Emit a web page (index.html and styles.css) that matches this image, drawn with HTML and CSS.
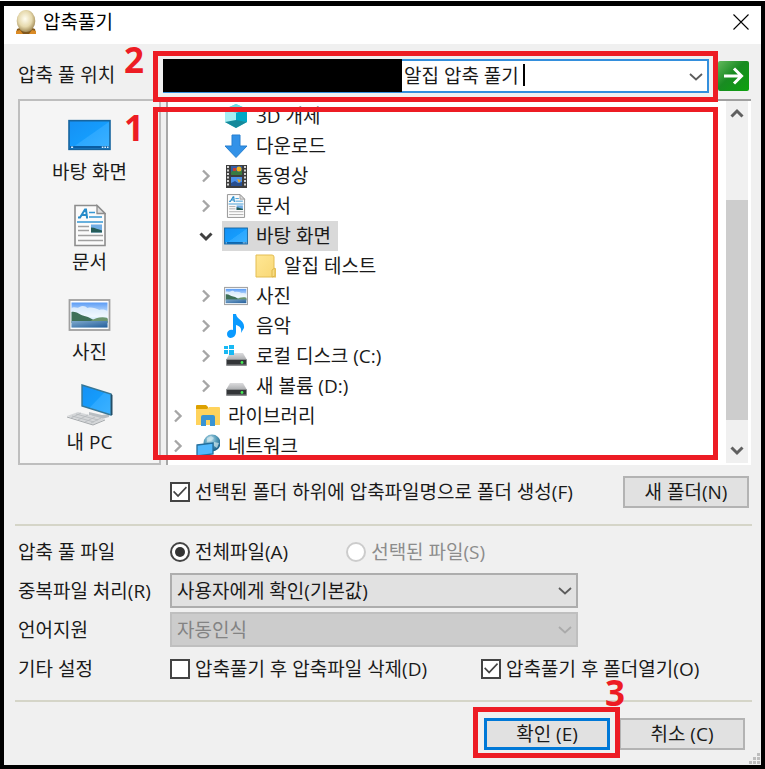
FILE: index.html
```html
<!DOCTYPE html>
<html lang="ko">
<head>
<meta charset="utf-8">
<meta name="viewport" content="width=device-width, initial-scale=1">
<title>압축풀기</title>
<link rel="stylesheet" href="styles.css">
</head>
<body>
<svg class="defs" aria-hidden="true">
  <defs>
    <linearGradient id="g-screen" x1="0" y1="0" x2="1" y2="1"><stop offset="0" stop-color="#1590f4"/><stop offset=".5" stop-color="#159cfc"/><stop offset=".52" stop-color="#2ca8ff"/><stop offset="1" stop-color="#3db2ff"/></linearGradient>
    <linearGradient id="g-sky" x1="0" y1="0" x2="0" y2="1"><stop offset="0" stop-color="#5b9cf5"/><stop offset=".55" stop-color="#e4f4ff"/><stop offset="1" stop-color="#b9dbef"/></linearGradient>
    <linearGradient id="g-sea" x1="0" y1="0" x2="1" y2="1"><stop offset="0" stop-color="#7fa9cc"/><stop offset="1" stop-color="#245f9c"/></linearGradient>
    <linearGradient id="g-drive" x1="0" y1="0" x2="0" y2="1"><stop offset="0" stop-color="#dcdcde"/><stop offset="1" stop-color="#a9abad"/></linearGradient>
    <linearGradient id="g-folder" x1="0" y1="0" x2="1" y2="1"><stop offset="0" stop-color="#ffe794"/><stop offset="1" stop-color="#f8d775"/></linearGradient>
    <radialGradient id="g-egg" cx=".45" cy=".4" r=".6"><stop offset="0" stop-color="#fffdf0"/><stop offset=".6" stop-color="#e6d9ad"/><stop offset="1" stop-color="#a38c58"/></radialGradient>
    <radialGradient id="g-globe" cx=".4" cy=".3" r=".7"><stop offset="0" stop-color="#c9e4ef"/><stop offset=".5" stop-color="#5aa0bd"/><stop offset="1" stop-color="#1d5f86"/></radialGradient>
    <symbol id="i-desktop" viewBox="0 0 42 30">
      <rect x="1" y="1" width="40" height="28" fill="url(#g-screen)" stroke="#17659f" stroke-width="1.6"/>
      <path d="M2 27h38" stroke="#0a5da2" stroke-width="2.6"/><path d="M3 27h2M33 27h1.600M35.500 27h1.600M38 27h1.600" stroke="#d9f0ff" stroke-width="1.600"/>
    </symbol>
    <symbol id="i-doc" viewBox="0 0 32 42">
      <path d="M1 1h22l8 8v32H1z" fill="#fbfbfb" stroke="#8d8d8d" stroke-width="1.6"/>
      <path d="M23 1v8h8z" fill="#dedede" stroke="#8d8d8d" stroke-width="1.300"/>
      <path d="M4 13h2l5-8h1l1 8h1M7 10.500h5" fill="none" stroke="#268bc9" stroke-width="2"/>
      <path d="M15 8h6M15 12.500h13M3 17.500h26" stroke="#3798d4" stroke-width="1.600"/>
      <path d="M4 22h11M4 26h11M4 31h25M4 36h25" stroke="#a0a0a0" stroke-width="1.400"/>
      <rect x="17" y="20" width="11" height="8" fill="#71aee5"/><path d="M17 23c4 0 7 2 11 3v2H17z" fill="#245c58"/>
    </symbol>
    <symbol id="i-picture" viewBox="0 0 42 32">
      <rect x="1" y="1" width="40" height="30" fill="#fff" stroke="#a0a0a0" stroke-width="1.800"/>
      <rect x="3" y="3.500" width="36" height="25" fill="url(#g-sky)"/>
      <path d="M3 9c3-2 6 1 8-1 3-2 6-1 8 1 4-1 8 0 12 2 3-1 6 0 8 1v6H3z" fill="#f1f8fc" opacity=".75"/>
      <path d="M3 13c5-1 8 3 13 4s8 4 12 5l11-2v4H3z" fill="#3f7058"/><path d="M22 22c5-3 11-5 17-3v4z" fill="#6c956e"/>
      <path d="M3 22h36v6.500H3z" fill="url(#g-sea)"/>
    </symbol>
    <symbol id="i-pc" viewBox="0 0 46 42">
      <path d="M22 28l13 3 7-1v3l-7 2-13-4z" fill="#b9bec2"/>
      <path d="M15 1l29 9v21l-29-9z" fill="url(#g-screen)" stroke="#377797" stroke-width="1.400"/><path d="M44 10l1.500 1v20L44 31z" fill="#244e68"/>
      <path d="M0 32l11-4 27 7-12 6z" fill="#d5d7d9"/><path d="M0 33l26 8 12-5" fill="none" stroke="#a4a8ab"/>
      <path d="M5 32l22 6M9 30l22 6M4 34l10-5M11 36l10-5M18 38l10-5M24 39l10-5" stroke="#b4b8bb" stroke-width=".8"/>
    </symbol>
    <symbol id="i-cube" viewBox="0 0 24 24">
      <path d="M12 0l11 5v13l-11 6L1 18V5z" fill="#55cbd8"/><path d="M12 0l11 5-11 4L1 5z" fill="#6fdbe3"/><path d="M1 5l11 4v9L1 18z" fill="#a5eff3"/><path d="M12 9l11-4v13l-11-1z" fill="#00a9c7"/><path d="M1 18l11-2 11 2-11 6z" fill="#15899b"/>
    </symbol>
    <symbol id="i-down" viewBox="0 0 24 24"><path d="M8 1h8v11h7L12 23.500 1 12h7z" fill="#3392e8" stroke="#267fcf"/></symbol>
    <symbol id="i-video" viewBox="0 0 24 24">
      <rect x="2" y="1" width="21" height="23" fill="#3d3d3d"/><path d="M4 2v21M21 2v21" stroke="#d7d7d7" stroke-width="2" stroke-dasharray="2 1.500"/>
      <rect x="7" y="2" width="11" height="9" fill="#315da5"/><path d="M7 8l4-3 3 3 4-2v5H7z" fill="#397b43"/><circle cx="15" cy="5" r="2.500" fill="#efb11d"/><path d="M9 4h3v3H9z" fill="#c43d36"/>
      <rect x="7" y="13" width="11" height="9" fill="#4c91eb"/><path d="M7 19l4-2 3 2 4-1v4H7z" fill="#284e8e"/><path d="M13 15l4 1-2 3z" fill="#e6a529"/>
    </symbol>
    <symbol id="i-folder" viewBox="0 0 24 24"><path d="M4 1h16q2 0 2 2v12h2v8H4z" fill="url(#g-folder)" stroke="#e3bd52"/><path d="M20 23v-7l3-2v8z" fill="#f8dc82" stroke="#dfb84b"/></symbol>
    <symbol id="i-music" viewBox="0 0 24 24"><path d="M9 0h3c1 6 9 6 8 14l-3 5c1-6-2-7-5-8v7c0 7-9 8-9 2 0-3 3-5 6-4z" fill="#0a9aff"/></symbol>
    <symbol id="i-drive" viewBox="0 0 24 24">
      <path d="M6 9h13l4 7H2z" fill="url(#g-drive)"/><rect x="2" y="15" width="21" height="7" rx="1" fill="#8b8d8f"/><rect x="3" y="16" width="19" height="4.500" fill="#333538"/><circle cx="18" cy="18.500" r="1.400" fill="#46ec54"/>
    </symbol>
    <symbol id="i-windrive" viewBox="0 0 24 24">
      <use href="#i-drive"/><path d="M0 2h4v3H0zM5 1h5v4H5zM0 6h4v4H0zM5 6h5v5H5z" fill="#18b9f4"/>
    </symbol>
    <symbol id="i-library" viewBox="0 0 24 24">
      <path d="M0 2q0-1 1-1h9l2 2v5H0z" fill="#dda100"/><path d="M0 5h11l2-2h10q1 0 1 1v17H0z" fill="#ffd35c"/><path d="M5 22v-9q0-2 2-2h10q2 0 2 2v9h-5v-6h-4v6z" fill="#3a94d3"/>
    </symbol>
    <symbol id="i-network" viewBox="0 0 24 24">
      <circle cx="16" cy="9" r="8.500" fill="url(#g-globe)"/><path d="M11 4l4-2 3 2-3 3-4 1zM18 8l5 1-2 5-3-2z" fill="#d0e7ed" opacity=".7"/>
      <path d="M1 11l16-2v11L1 22z" fill="#51b8fc" stroke="#236e9c" stroke-width="1.300"/>
    </symbol>
    <symbol id="i-right" viewBox="0 0 12 16"><path d="M3 2.500l5.500 5.500L3 13.500" fill="none" stroke="currentColor" stroke-width="2.400"/></symbol>
    <symbol id="i-expand" viewBox="0 0 14 14"><path d="M1.500 4.500L7 10l5.500-5.500" fill="none" stroke="currentColor" stroke-width="3"/></symbol>
    <symbol id="i-chev" viewBox="0 0 14 8"><path d="M1 1l6 5.500L13 1" fill="none" stroke="currentColor" stroke-width="1.800"/></symbol>
  </defs>
</svg>
<main class="window">
  <header class="titlebar">
    <svg class="egg" viewBox="0 0 20 24" aria-hidden="true"><path d="M0 24l1-5 5-2h8l5 2 1 5z" fill="#81571c"/><path d="M0 21l4-1 3 4H0zM20 21l-4-1-3 4h7z" fill="#da8b26"/><ellipse cx="10" cy="11" rx="9.300" ry="11" fill="url(#g-egg)"/></svg>
    <h1 class="title">압축풀기</h1>
    <button class="close" aria-label="닫기"><svg viewBox="0 0 16 16"><path d="M.5.5l15 15M15.500.5l-15 15" stroke="#000" stroke-width="1.100"/></svg></button>
  </header>
  <div class="content">
    <div class="path-row">
      <label class="path-label" for="path">압축 풀 위치</label>
      <span class="step step-two">2</span>
      <div class="combo">
        <input id="path" class="path" type="text" value="알집 압축 풀기">
        <span class="redacted"></span><span class="caret"></span>
        <svg class="chev"><use href="#i-chev"/></svg>
      </div>
      <button class="go" aria-label="이동"><svg viewBox="0 0 20 18"><path d="M0 9h17M10 1.500L17.500 9 10 16.500" fill="none" stroke="#fff" stroke-width="3"/></svg></button>
      <span class="mark mark-path"></span>
    </div>
    <div class="panes">
      <nav class="places">
        <button class="place"><span class="place-icon"><svg class="wide"><use href="#i-desktop"/></svg></span>바탕 화면</button>
        <button class="place"><span class="place-icon"><svg class="tall"><use href="#i-doc"/></svg></span>문서</button>
        <button class="place"><span class="place-icon"><svg class="wide"><use href="#i-picture"/></svg></span>사진</button>
        <button class="place"><span class="place-icon"><svg class="big"><use href="#i-pc"/></svg></span>내 PC</button>
      </nav>
      <span class="step step-one">1</span>
      <div class="tree">
        <ul class="nodes">
          <li class="node level-two"><span class="toggle"></span><span class="item"><svg class="icon"><use href="#i-cube"/></svg>3D 개체</span></li>
          <li class="node level-two"><span class="toggle"></span><span class="item"><svg class="icon"><use href="#i-down"/></svg>다운로드</span></li>
          <li class="node level-two"><svg class="toggle"><use href="#i-right"/></svg><span class="item"><svg class="icon"><use href="#i-video"/></svg>동영상</span></li>
          <li class="node level-two"><svg class="toggle"><use href="#i-right"/></svg><span class="item"><svg class="icon"><use href="#i-doc"/></svg>문서</span></li>
          <li class="node level-two"><svg class="toggle open"><use href="#i-expand"/></svg><span class="item selected"><svg class="icon"><use href="#i-desktop"/></svg>바탕 화면</span></li>
          <li class="node level-three"><span class="toggle"></span><span class="item"><svg class="icon"><use href="#i-folder"/></svg>알집 테스트</span></li>
          <li class="node level-two"><svg class="toggle"><use href="#i-right"/></svg><span class="item"><svg class="icon"><use href="#i-picture"/></svg>사진</span></li>
          <li class="node level-two"><svg class="toggle"><use href="#i-right"/></svg><span class="item"><svg class="icon"><use href="#i-music"/></svg>음악</span></li>
          <li class="node level-two"><svg class="toggle"><use href="#i-right"/></svg><span class="item"><svg class="icon"><use href="#i-windrive"/></svg>로컬 디스크 (C:)</span></li>
          <li class="node level-two"><svg class="toggle"><use href="#i-right"/></svg><span class="item"><svg class="icon"><use href="#i-drive"/></svg>새 볼륨 (D:)</span></li>
          <li class="node"><svg class="toggle"><use href="#i-right"/></svg><span class="item"><svg class="icon"><use href="#i-library"/></svg>라이브러리</span></li>
          <li class="node"><svg class="toggle"><use href="#i-right"/></svg><span class="item"><svg class="icon"><use href="#i-network"/></svg>네트워크</span></li>
        </ul>
        <div class="scrollbar">
          <button class="arrow up" aria-label="위로"><svg><use href="#i-expand"/></svg></button>
          <div class="track"><div class="thumb"></div></div>
          <button class="arrow" aria-label="아래로"><svg><use href="#i-expand"/></svg></button>
        </div>
      </div>
      <span class="mark mark-tree"></span>
    </div>
    <div class="create-row">
      <label class="choice"><input type="checkbox" checked>선택된 폴더 하위에 압축파일명으로 폴더 생성(F)</label>
      <button class="button">새 폴더(N)</button>
    </div>
    <hr class="divider">
    <div class="options">
      <span>압축 풀 파일</span>
      <div class="choices files">
        <label class="choice"><input type="radio" name="files" checked>전체파일(A)</label>
        <label class="choice off"><input type="radio" name="files" disabled>선택된 파일(S)</label>
      </div>
      <label for="dup">중복파일 처리(R)</label>
      <div class="select"><select id="dup"><option>사용자에게 확인(기본값)</option></select><svg class="chev"><use href="#i-chev"/></svg></div>
      <label for="lang">언어지원</label>
      <div class="select off"><select id="lang" disabled><option>자동인식</option></select><svg class="chev"><use href="#i-chev"/></svg></div>
      <span>기타 설정</span>
      <div class="choices extras">
        <label class="choice"><input type="checkbox">압축풀기 후 압축파일 삭제(D)</label>
        <label class="choice"><input type="checkbox" checked>압축풀기 후 폴더열기(O)</label>
      </div>
    </div>
    <hr class="divider">
    <footer class="actions">
      <span class="confirm"><button class="button primary">확인 (E)</button><span class="mark mark-ok"></span><span class="step step-three">3</span></span>
      <button class="button">취소 (C)</button>
    </footer>
  </div>
  <svg class="grip" viewBox="0 0 12 12" aria-hidden="true"><path d="M8 0h3v3H8zM4 4h3v3H4zM8 4h3v3H8zM0 8h3v3H0zM4 8h3v3H4zM8 8h3v3H8z" fill="#bdbdbd"/></svg>
</main>
</body>
</html>
```
FILE: styles.css
```css
* {
  box-sizing: border-box;
}

body {
  margin: 0;
  padding-top: 1px;
  background: #fff;
  color: #1a1a1a;
  font: 19px/24px "Open Sans", "Noto Sans CJK KR", sans-serif;
}

button,
input,
select {
  margin: 0;
  color: inherit;
  font: inherit;
}

button {
  padding: 0;
  border: 0;
  background: none;
}

.defs {
  position: absolute;
  width: 0;
  height: 0;
}

.window {
  position: relative;
  display: flex;
  flex-direction: column;
  min-height: calc(100vh - 1px);
  border: 4px solid #000;
  border-top-width: 5px;
  background: #f0f0f0;
}

.titlebar {
  display: flex;
  align-items: center;
  gap: 7px;
  height: 38px;
  padding: 0 12px 6px;
  background: #fff;
}

.egg {
  width: 20px;
  height: 24px;
}

.title {
  flex: 1;
  margin: 0;
  color: #000;
  font-size: 19px;
  font-weight: 400;
}

.close svg {
  display: block;
  width: 16px;
  height: 16px;
}

.content {
  display: flex;
  flex: 1;
  flex-direction: column;
  padding: 15px 12px 15px 14px;
}

.path-row {
  position: relative;
  z-index: 1;
  display: flex;
  align-items: center;
  gap: 9px;
  height: 34px;
}

.path-label {
  width: 136px;
  padding-bottom: 2px;
}

.combo {
  position: relative;
  flex: 1;
}

.path {
  display: block;
  width: 100%;
  height: 34px;
  padding: 0 32px 2px 239px;
  border: 2px solid #338fdd;
  outline: 0;
  background: #fff;
}

.redacted {
  position: absolute;
  inset: 0 auto 1px 0;
  width: 239px;
  background: #000;
}

.caret {
  position: absolute;
  top: 5px;
  left: 360px;
  width: 2px;
  height: 22px;
  background: #000;
}

.chev {
  position: absolute;
  top: 14px;
  right: 6px;
  width: 14px;
  height: 8px;
  color: #5c5c5c;
  pointer-events: none;
}

.go {
  display: grid;
  place-items: center;
  width: 31px;
  height: 30px;
  border-radius: 2px;
  background: linear-gradient(135deg, #63b85c, #198b22 45%, #0ca20d);
}

.go svg {
  width: 20px;
  height: 18px;
}

.mark {
  position: absolute;
  border: 5px solid #ed1c24;
  pointer-events: none;
}

.mark-path {
  inset: -8px 31px -9px 135px;
}

.mark-tree {
  inset: 8px 33px 5px 135px;
}

.mark-ok {
  inset: -11px -10px -8px -11px;
}

.step {
  position: absolute;
  color: #ed1c24;
  font-size: 35px;
  font-weight: 700;
  line-height: 26px;
}

.step-two {
  top: -12px;
  left: 106px;
}

.step-one {
  top: 16px;
  left: 106px;
}

.step-three {
  top: -38px;
  right: -15px;
}

.panes {
  position: relative;
  display: flex;
  flex: 1;
  gap: 5px;
  margin: 6px -2px 11px 0;
}

.places {
  display: flex;
  flex-direction: column;
  gap: 19px;
  width: 143px;
  padding-top: 12px;
  border: 2px solid #bebebe;
  background: #f5f5f5;
}

.place {
  display: flex;
  flex-direction: column;
  align-items: center;
  gap: 3px;
}

.place-icon {
  display: grid;
  place-items: center;
  height: 44px;
}

.wide {
  width: 43px;
  height: 32px;
}

.tall {
  width: 32px;
  height: 43px;
}

.big {
  width: 46px;
  height: 42px;
}

.tree {
  display: flex;
  flex: 1;
  border-top: 2px solid #a0a0a0;
  border-left: 2px solid #a8a8a8;
  background: #fff;
}

.nodes {
  flex: 1;
  margin: 0;
  padding: 0;
  list-style: none;
}

.node {
  display: flex;
  align-items: center;
  gap: 10px;
  height: 30px;
  padding-left: 4px;
}

.level-two {
  padding-left: 32px;
}

.level-three {
  padding-left: 60px;
}

.toggle {
  width: 12px;
  height: 16px;
  color: #a6a6a6;
}

.toggle.open {
  width: 14px;
  margin: 0 -1px;
  color: #404040;
}

.item {
  display: flex;
  align-items: center;
  gap: 8px;
  height: 30px;
  padding: 0 7px 0 2px;
}

.selected {
  background: #d9d9d9;
}

.icon {
  width: 24px;
  height: 24px;
}

.scrollbar {
  display: flex;
  flex-direction: column;
  width: 22px;
  margin: 0 3px 2px 0;
  background: #f0f0f0;
}

.arrow {
  display: grid;
  place-items: center;
  height: 26px;
  color: #606060;
}

.arrow svg {
  width: 14px;
  height: 14px;
}

.up svg {
  transform: rotate(180deg);
}

.track {
  display: flex;
  flex: 1;
  flex-direction: column;
  justify-content: flex-end;
  padding-bottom: 17px;
}

.thumb {
  height: 75%;
  background: #cdcdcd;
}

.create-row {
  display: flex;
  align-items: center;
  justify-content: space-between;
  padding-left: 152px;
}

.choice {
  display: flex;
  align-items: center;
  gap: 5px;
  white-space: nowrap;
}

.choice input {
  display: grid;
  place-items: center;
  width: 20px;
  height: 20px;
  border: 2px solid #444;
  background: #fff;
  appearance: none;
}

.choice input[type="radio"] {
  border-radius: 50%;
}

.choice input[type="radio"]:checked::before {
  width: 10px;
  height: 10px;
  border-radius: 50%;
  background: #333;
  content: "";
}

.choice input[type="checkbox"]:checked::before {
  width: 14px;
  height: 12px;
  background: #444;
  clip-path: polygon(0 50%, 8% 40%, 36% 72%, 92% 5%, 100% 15%, 36% 94%);
  content: "";
}

.choice.off {
  color: #8c8c8c;
}

.choice.off input {
  border-color: #ccc;
}

.button {
  width: 126px;
  height: 32px;
  border: 2px solid #b3b3b3;
  background: #e1e1e1;
}

.primary {
  border: 3px solid #0078d7;
}

.divider {
  height: 2px;
  margin: 16px -3px 8px;
  border: 0;
  background: #d5d5c8;
}

.options {
  display: grid;
  grid-template-columns: 152px 1fr 171px;
  grid-auto-rows: 35px;
  row-gap: 4px;
  align-items: center;
}

.choices {
  display: flex;
  grid-column: 2 / -1;
}

.files {
  gap: 58px;
}

.extras {
  gap: 54px;
}

.options > :nth-child(odd) {
  grid-column: 1;
  white-space: nowrap;
}

.select {
  position: relative;
}

.select select {
  display: block;
  width: 100%;
  height: 35px;
  padding: 0 30px 0 5px;
  border: 2px solid #adadad;
  border-radius: 0;
  background: #e1e1e1;
  appearance: none;
}

.select.off select {
  border-color: #bfbfbf;
  background: #ccc;
  color: #838383;
  opacity: 1;
}

.select.off .chev {
  color: #aaa;
}

.options + .divider {
  margin: 14px -3px 16px;
}

.actions {
  display: flex;
  justify-content: flex-end;
  gap: 9px;
  padding-right: 4px;
}

.confirm {
  position: relative;
  z-index: 1;
}

.confirm .button {
  display: block;
}

.grip {
  position: absolute;
  right: 0;
  bottom: 0;
  width: 12px;
  height: 12px;
}
```
